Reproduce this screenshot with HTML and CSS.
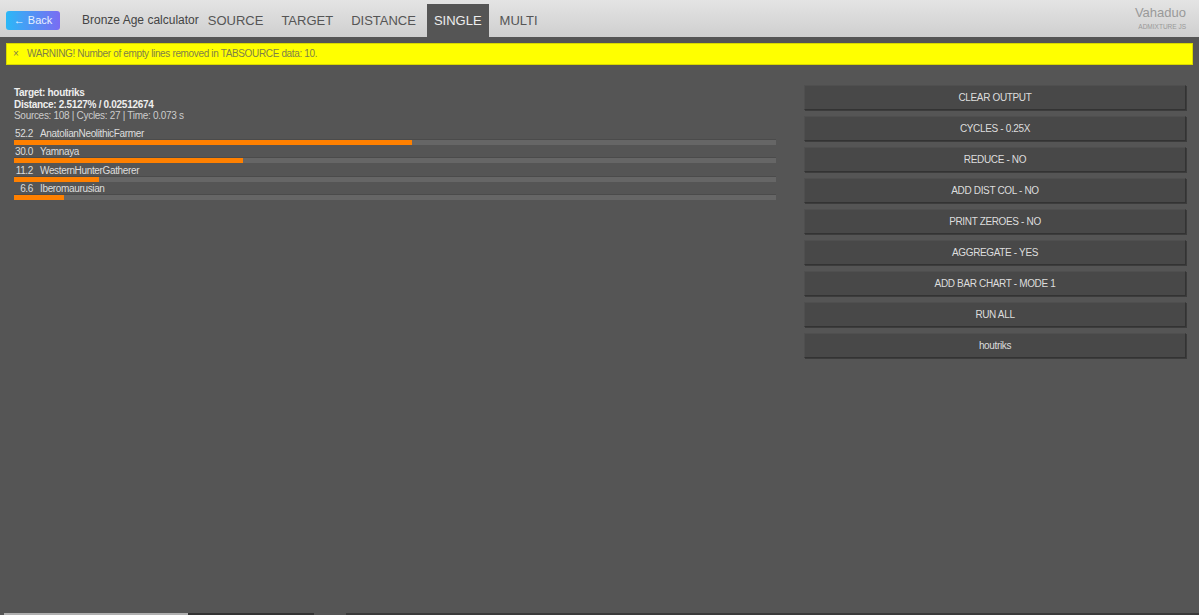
FILE: index.html
```html
<!DOCTYPE html>
<html lang="en">
<head>
  <meta charset="UTF-8" />
  <meta name="viewport" content="width=device-width, initial-scale=1.0" />
  <title>Vahaduo Admixture JS</title>
  <link rel="stylesheet" href="styles.css">
</head>
<body>
  <div class="topbar">
    <a class="back" href="#">&larr; Back</a>
    <span class="app-title">Bronze Age calculator</span>
    <span class="tab">SOURCE</span>
    <span class="tab">TARGET</span>
    <span class="tab">DISTANCE</span>
    <span class="tab active">SINGLE</span>
    <span class="tab">MULTI</span>
    <div class="brand">
      <div class="brand-name">Vahaduo</div>
      <div class="brand-sub">ADMIXTURE JS</div>
    </div>
  </div>

  <div class="warning"><span class="close">&times;</span> WARNING! Number of empty lines removed in TABSOURCE data: 10.</div>

  <div class="main">
    <div class="output">
      <div class="result-head">
        <b>Target: houtriks</b><br>
        <b>Distance: 2.5127% / 0.02512674</b><br>
        <span class="stats">Sources: 108 | Cycles: 27 | Time: 0.073 s</span>
      </div>
      <div class="row">
        <div class="label"><span class="pct">52.2</span>AnatolianNeolithicFarmer</div>
        <div class="track"><div class="fill" style="width: 52.2%"></div></div>
      </div>
      <div class="row">
        <div class="label"><span class="pct">30.0</span>Yamnaya</div>
        <div class="track"><div class="fill" style="width: 30%"></div></div>
      </div>
      <div class="row">
        <div class="label"><span class="pct">11.2</span>WesternHunterGatherer</div>
        <div class="track"><div class="fill" style="width: 11.2%"></div></div>
      </div>
      <div class="row">
        <div class="label"><span class="pct">6.6</span>Iberomaurusian</div>
        <div class="track"><div class="fill" style="width: 6.6%"></div></div>
      </div>
    </div>

    <div class="controls">
      <button>CLEAR OUTPUT</button>
      <button>CYCLES - 0.25X</button>
      <button>REDUCE - NO</button>
      <button>ADD DIST COL - NO</button>
      <button>PRINT ZEROES - NO</button>
      <button>AGGREGATE - YES</button>
      <button>ADD BAR CHART - MODE 1</button>
      <button>RUN ALL</button>
      <button>houtriks</button>
    </div>
  </div>

  <div class="bottom-edge">
    <span class="edge-a"></span>
    <span class="edge-b"></span>
    <span class="edge-gap"></span>
    <span class="edge-c"></span>
  </div>
</body>
</html>
```

FILE: styles.css
```css
html, body {
  height: 100%;
}
body {
  font-family: "Liberation Sans", Arial, sans-serif;
  background-color: #555;
  margin: 0;
  color: #ddd;
  overflow: hidden;
  display: flex;
  flex-direction: column;
}
.topbar {
  height: 37px;
  background: linear-gradient(#e4e4e4, #cfcfcf);
  display: flex;
  align-items: flex-end;
  padding: 0 13px 0 6px;
  white-space: nowrap;
}
.back {
  align-self: flex-start;
  margin-top: 11px;
  width: 54px;
  height: 19px;
  line-height: 19px;
  text-align: center;
  font-size: 11px;
  color: #e8f0ff;
  text-decoration: none;
  border-radius: 3px;
  background: linear-gradient(90deg, #2bb8f7, #7a6cf2);
  margin-right: 22px;
}
.app-title {
  font-size: 12px;
  color: #444;
  line-height: 33px;
  margin-right: 2px;
}
.tab {
  font-size: 13px;
  color: #555;
  padding: 0 7px;
  margin-right: 4px;
  line-height: 33px;
}
.tab.active {
  background: #555;
  color: #eee;
}
.brand {
  margin-left: auto;
  align-self: flex-start;
  text-align: right;
  padding-top: 5px;
}
.brand-name {
  font-size: 13px;
  color: #999;
}
.brand-sub {
  font-size: 6.5px;
  color: #999;
  margin-top: 3px;
}
.warning {
  margin: 6px 6px 0;
  height: 20px;
  line-height: 20px;
  background: #ff0;
  border: 1px solid #d8d800;
  color: #7f7f48;
  font-size: 10px;
  letter-spacing: -0.35px;
  padding-left: 6px;
}
.close {
  margin-right: 6px;
}
.main {
  flex: 1;
  display: grid;
  grid-template-columns: 1fr 382px;
  column-gap: 28px;
  padding: 19px 13px 0 14px;
  align-items: start;
}
.output {
  padding-top: 3px;
}
.result-head {
  font-size: 10px;
  letter-spacing: -0.3px;
  line-height: 11.6px;
  color: #eee;
  margin-bottom: 6px;
}
.stats {
  color: #ccc;
}
.row {
  height: 18.4px;
}
.label {
  font-size: 10px;
  letter-spacing: -0.35px;
  line-height: 11px;
  color: #ddd;
  white-space: nowrap;
}
.pct {
  display: inline-block;
  width: 19px;
  text-align: right;
  margin-right: 7px;
}
.track {
  height: 5px;
  background: #666;
  border-top: 1px solid #4b4b4b;
}
.fill {
  height: 100%;
  background: #ff8000;
}
.controls {
  display: flex;
  flex-direction: column;
  gap: 6px;
  padding-top: 1px;
}
.controls button {
  height: 25px;
  margin: 0;
  padding: 0;
  font-family: inherit;
  font-size: 10px;
  letter-spacing: -0.35px;
  color: #ddd;
  background: #484848;
  border: 1px solid #4f4f4f;
  border-right-color: #333;
  border-bottom-color: #333;
  box-shadow: 1px 1px 0 #3c3c3c;
}
.bottom-edge {
  display: flex;
  height: 2px;
  padding-left: 4px;
}
.edge-a {
  width: 184px;
  background: #b0b0b0;
}
.edge-b {
  width: 126px;
  background: #333;
}
.edge-gap {
  width: 32px;
}
.edge-c {
  flex: 1;
  background: #3a3a3a;
}
```
